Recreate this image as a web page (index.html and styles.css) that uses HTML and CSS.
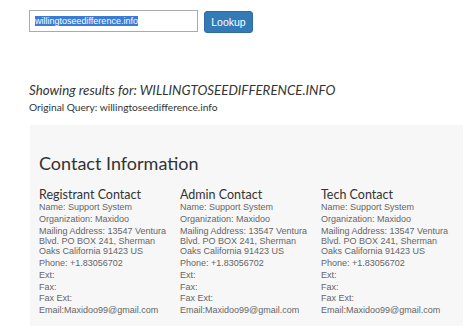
FILE: index.html
```html
<!DOCTYPE html>
<html>
<head>
<meta charset="utf-8"/>
    <title>Whois Lookup</title>
    <link rel="stylesheet" href="styles.css">
</head>
<body>
    <form class="search" name="lookupForm">
        <div class="query-box"><span class="selected">willingtoseedifference.info</span></div>
        <button type="submit" class="btn-lookup">Lookup</button>
    </form>

    <div class="results-head">
        <h3 class="showing">Showing results for: WILLINGTOSEEDIFFERENCE.INFO</h3>
        <p class="original">Original Query: willingtoseedifference.info</p>
    </div>

    <div class="panel">
        <h2 class="panel-title">Contact Information</h2>
        <div class="contacts">
            <div class="contact">
                <h4>Registrant Contact</h4>
                <p>Name: Support System</p>
                <p>Organization: Maxidoo</p>
                <p>Mailing Address: 13547 Ventura Blvd. PO BOX 241, Sherman Oaks California 91423 US</p>
                <p>Phone: +1.83056702</p>
                <p>Ext:</p>
                <p>Fax:</p>
                <p>Fax Ext:</p>
                <p>Email:Maxidoo99@gmail.com</p>
            </div>
            <div class="contact">
                <h4>Admin Contact</h4>
                <p>Name: Support System</p>
                <p>Organization: Maxidoo</p>
                <p>Mailing Address: 13547 Ventura Blvd. PO BOX 241, Sherman Oaks California 91423 US</p>
                <p>Phone: +1.83056702</p>
                <p>Ext:</p>
                <p>Fax:</p>
                <p>Fax Ext:</p>
                <p>Email:Maxidoo99@gmail.com</p>
            </div>
            <div class="contact">
                <h4>Tech Contact</h4>
                <p>Name: Support System</p>
                <p>Organization: Maxidoo</p>
                <p>Mailing Address: 13547 Ventura Blvd. PO BOX 241, Sherman Oaks California 91423 US</p>
                <p>Phone: +1.83056702</p>
                <p>Ext:</p>
                <p>Fax:</p>
                <p>Fax Ext:</p>
                <p>Email:Maxidoo99@gmail.com</p>
            </div>
        </div>
    </div>
</body>
</html>
```

FILE: styles.css
```css
body {
    margin: 0;
    background: #fff;
    color: #333;
    font-family: "Liberation Sans", Arial, sans-serif;
}

.search {
    display: flex;
    gap: 6px;
    margin: 0;
    padding: 10px 0 0 29px;
}

.query-box {
    box-sizing: border-box;
    width: 169px;
    height: 22px;
    border: 1px solid #aaa;
    background: #fff;
    padding: 0 5px;
    display: flex;
    align-items: center;
    font-size: 9px;
}

.selected {
    background: #3a7bd5;
    color: #fff;
}

.btn-lookup {
    box-sizing: border-box;
    width: 49px;
    height: 22px;
    margin-top: 1px;
    border: 1px solid #2e6da4;
    border-radius: 3px;
    background: #337ab7;
    color: #fff;
    font-family: "Liberation Sans", Arial, sans-serif;
    font-size: 10.5px;
    padding: 0;
}

.results-head {
    padding: 47px 0 0 29px;
}

.showing {
    margin: 0;
    font-family: Lato, sans-serif;
    font-style: italic;
    font-weight: normal;
    font-size: 13.3px;
    line-height: 20px;
    color: #333;
}

.original {
    margin: 0;
    font-family: Lato, sans-serif;
    font-size: 10.2px;
    line-height: 14px;
}

.panel {
    box-sizing: border-box;
    width: 433px;
    height: 201px;
    margin: 11px 0 0 30px;
    background: #f7f7f7;
    padding: 26px 9px 0 9px;
}

.panel-title {
    margin: 0 0 12px 0;
    font-family: Lato, sans-serif;
    font-weight: normal;
    font-size: 18px;
    line-height: 24px;
}

.contacts {
    display: grid;
    grid-template-columns: 141px 141px 141px;
}

.contact h4 {
    margin: 0;
    font-family: Lato, sans-serif;
    font-weight: normal;
    font-size: 12.5px;
    line-height: 15px;
}

.contact p {
    margin: 0 0 1.5px 0;
    padding-right: 3px;
    font-size: 9px;
    line-height: 10.3px;
    color: #666;
}
```
